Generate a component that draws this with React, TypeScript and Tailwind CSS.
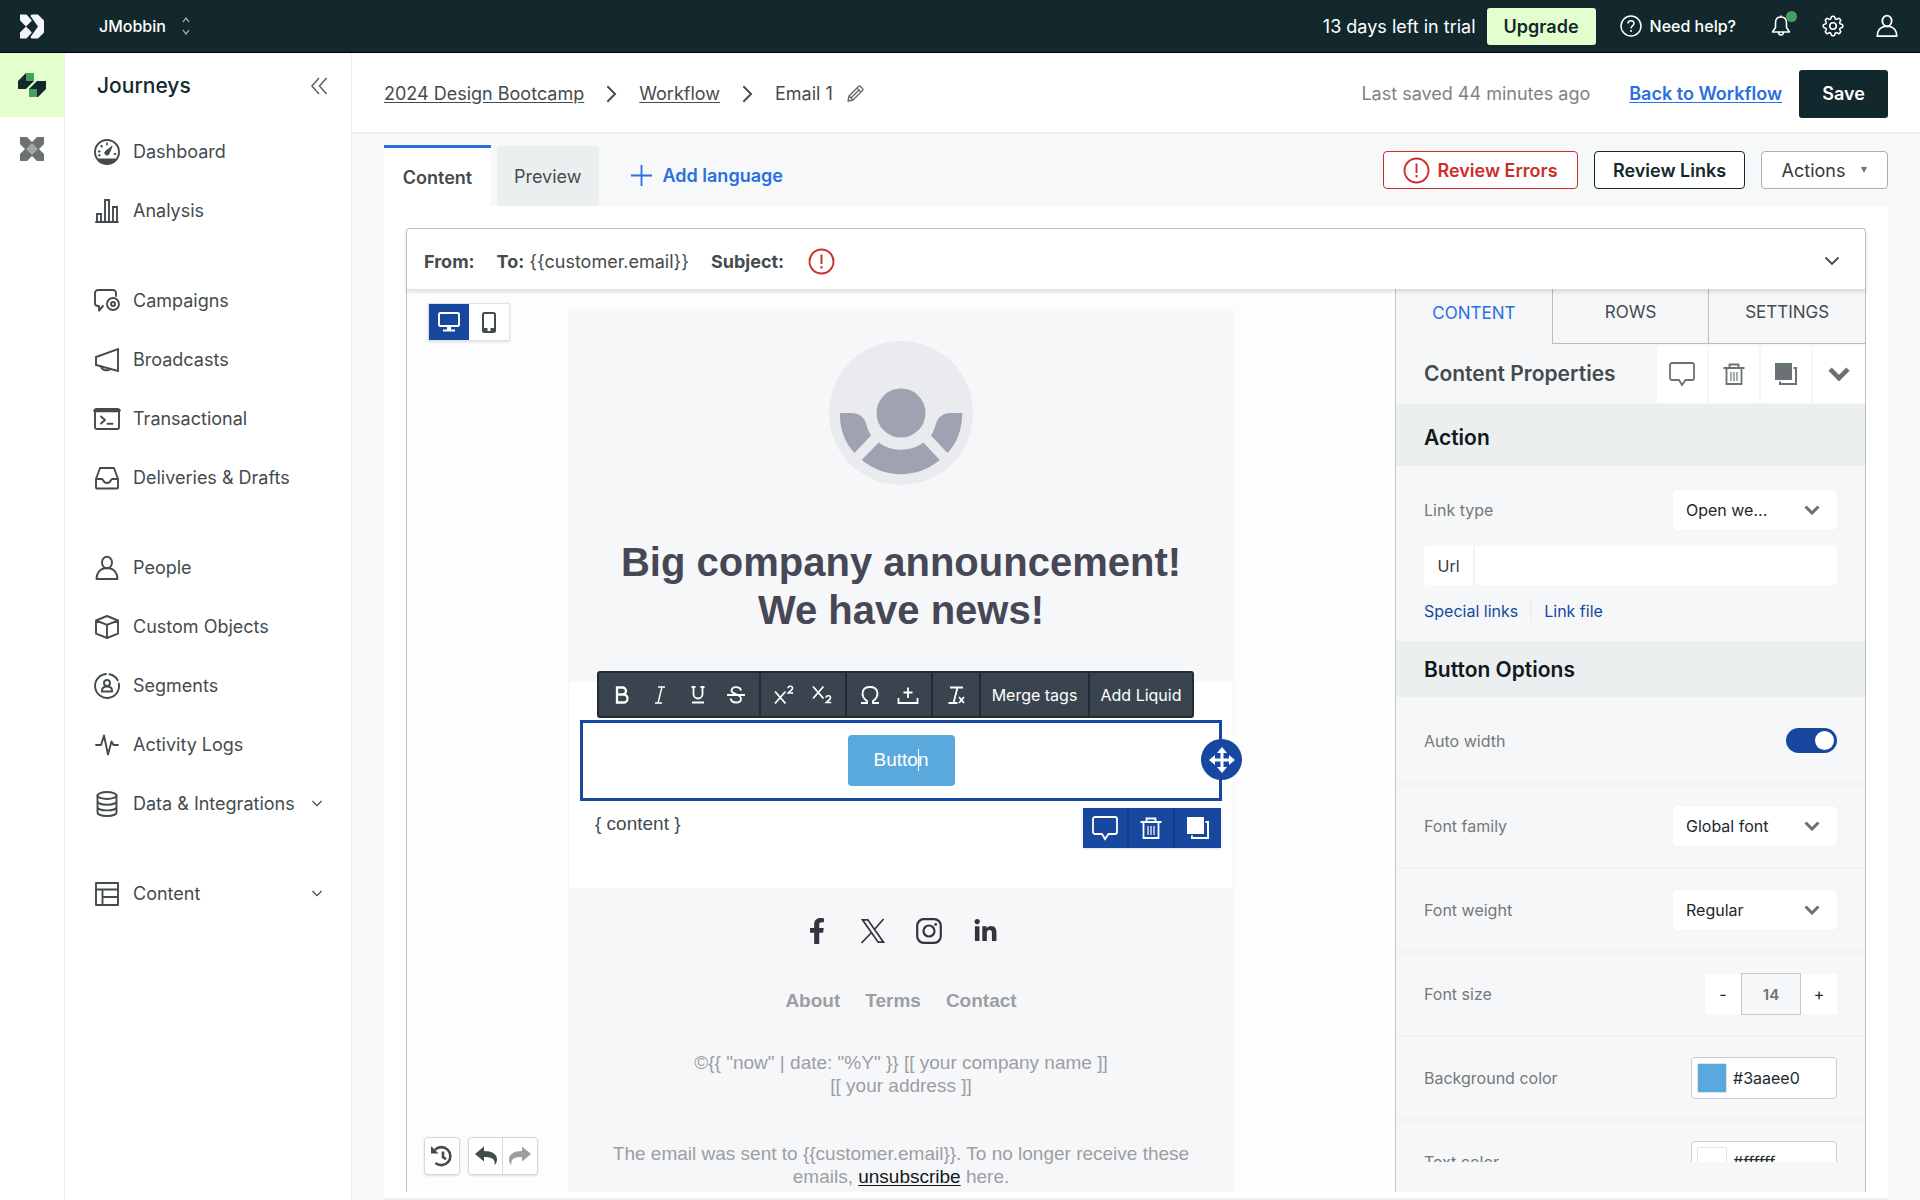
import { useState, type ReactNode } from 'react';
import { FaFacebookF, FaLinkedinIn } from 'react-icons/fa';
import { HiOutlineCog8Tooth } from 'react-icons/hi2';

interface NavItem {
  label: string;
  icon: ReactNode;
  expandable?: boolean;
}

const line = {
  width: 28,
  height: 28,
  viewBox: '0 0 28 28',
  fill: 'none',
  stroke: 'currentColor',
  strokeWidth: 1.9,
  strokeLinejoin: 'round' as const,
  strokeLinecap: 'round' as const,
};

const navGroups: NavItem[][] = [
  [
    {
      label: 'Dashboard',
      icon: (
        <svg {...line}>
          <circle cx="14" cy="14" r="12" />
          <path d="M5.5 21.5h17a12 12 0 0 1-17 0z" fill="currentColor" />
          <path d="M19 8.500l-3 7.200a2.200 2.200 0 1 1-3.200-2.700z" fill="currentColor" strokeWidth="1" />
          <path d="M14 5.500v1M8.300 7.800l.7.800M5.700 13.500h1M21.600 16h.8M6 17.500l.8-.3" />
        </svg>
      ),
    },
    {
      label: 'Analysis',
      icon: (
        <svg {...line}>
          <path d="M3 25h22M4 25v-8h4v8M12 25V3h4v22M20 25V10h4v15" strokeLinejoin="miter" />
        </svg>
      ),
    },
  ],
  [
    {
      label: 'Campaigns',
      icon: (
        <svg {...line}>
          <path d="M23 9V6a3 3 0 0 0-3-3H5a3 3 0 0 0-3 3v10a3 3 0 0 0 3 3h1v4.500l4-4.500" />
          <circle cx="20" cy="17" r="6" />
          <circle cx="20" cy="17" r="2" />
        </svg>
      ),
    },
    {
      label: 'Broadcasts',
      icon: (
        <svg {...line}>
          <path d="M25 3v22L3 19V11z" strokeLinejoin="miter" />
          <path d="M8 20.500c1 4.500 8 4.500 9.500 2.500" />
        </svg>
      ),
    },
    {
      label: 'Transactional',
      icon: (
        <svg {...line}>
          <rect x="2" y="4" width="24" height="20" rx="1.500" />
          <path d="M2 5.500h24" strokeWidth="3.500" />
          <path d="M8 11.500l4 3.500-4 3.500M14.500 18.700h5" />
        </svg>
      ),
    },
    {
      label: 'Deliveries & Drafts',
      icon: (
        <svg {...line}>
          <path d="M3 15L7 4h14l4 11v8.500a1 1 0 0 1-1 1H4a1 1 0 0 1-1-1z" />
          <path d="M3 15h6c1.200 0 1.200 4 5 4s3.800-4 5-4h6" />
        </svg>
      ),
    },
  ],
  [
    { label: 'People', icon: <PersonIcon size={28} /> },
    {
      label: 'Custom Objects',
      icon: (
        <svg {...line}>
          <path d="M14 3l11 4.500v13.200L14 25 3 20.700V7.500zM3 7.500l11 4.300 11-4.300M14 11.800V25" />
        </svg>
      ),
    },
    {
      label: 'Segments',
      icon: (
        <svg {...line}>
          <path d="M13 2a12 12 0 1 0 12.800 9.500M16.500 2.300a12 12 0 0 1 8.200 6" />
          <circle cx="14" cy="11" r="3" />
          <path d="M8.800 19.500c0-3 2-5 5.200-5s5.200 2 5.200 5z" />
        </svg>
      ),
    },
    {
      label: 'Activity Logs',
      icon: (
        <svg {...line}>
          <path d="M3 14h5l3-9.500 4 19 3.500-13 2 3.500H25" />
        </svg>
      ),
    },
    {
      label: 'Data & Integrations',
      expandable: true,
      icon: (
        <svg {...line}>
          <ellipse cx="14" cy="5.500" rx="9.500" ry="3.500" />
          <path d="M4.500 5.500v17c0 2 4 3.500 9.500 3.500s9.500-1.500 9.500-3.500v-17M4.500 11.200c0 2 4 3.500 9.500 3.500s9.500-1.500 9.500-3.500M4.500 16.900c0 2 4 3.500 9.500 3.500s9.500-1.500 9.500-3.500" />
        </svg>
      ),
    },
  ],
  [
    {
      label: 'Content',
      expandable: true,
      icon: (
        <svg {...line}>
          <path d="M3 3h22v22H3zM3 9.500h22M9.500 9.500V25M9.500 17H25" />
        </svg>
      ),
    },
  ],
];

function PersonIcon({ size }: { size: number }) {
  return (
    <svg {...line} width={size} height={size}>
      <ellipse cx="14" cy="8.500" rx="5" ry="5.800" />
      <path d="M3.500 25c0-6 3.500-10 8-10.700h5c4.500.700 8 4.700 8 10.700z" />
    </svg>
  );
}

function Chevron({ className, width = 2 }: { className: string; width?: number }) {
  return (
    <svg viewBox="0 0 16 10" className={className} fill="none" stroke="currentColor" strokeWidth={width}>
      <path d="M1.500 1.500L8 8l6.500-6.500" />
    </svg>
  );
}

function ErrorIcon() {
  return (
    <svg width="27" height="27" viewBox="0 0 27 27" fill="none" stroke="currentColor" strokeWidth="1.900">
      <circle cx="13.500" cy="13.500" r="12" />
      <path d="M13.500 6.500v9.500M13.500 18v2.500" />
    </svg>
  );
}

function CommentIcon() {
  return (
    <svg width="26" height="26" viewBox="0 0 26 26" fill="none" stroke="currentColor" strokeWidth="1.800">
      <path d="M3 2h20a2 2 0 0 1 2 2v13a2 2 0 0 1-2 2h-6.500L13 24l-3-5H3a2 2 0 0 1-2-2V4a2 2 0 0 1 2-2z" />
    </svg>
  );
}

function TrashIcon() {
  return (
    <svg width="24" height="24" viewBox="0 0 24 24" fill="none" stroke="currentColor" strokeWidth="1.800">
      <path d="M1.500 6h21M4.500 6v16h15V6M7.500 6V2.500h9V6" />
      <path d="M9 10v9M12 10v9M15 10v9" strokeWidth="1.200" />
    </svg>
  );
}

function CopyIcon() {
  return (
    <svg width="22" height="22" viewBox="0 0 22 22">
      <path d="M0 0h17v17H0z" fill="currentColor" />
      <path d="M18.500 5H21v16H5v-2.500" fill="none" stroke="currentColor" strokeWidth="2" />
    </svg>
  );
}

function TopBar() {
  return (
    <header className="flex h-[53px] shrink-0 items-center border-b border-black bg-[#12282c] px-5 text-white">
      <svg width="24" height="25" viewBox="0 0 24 24" fill="#f4f5fb">
        <path d="M0 0h6.500l5 5.500v1L6 12 0 6zM0 24h6.500l5-5.500v-1L6 12 0 18z" />
        <path d="M11.500 0H18l6 6v12l-6 6h-6.500l-1-1.500L18 12 10.500 1.500z" />
      </svg>
      <button className="ml-[55px] flex items-center gap-4 text-[16px] font-medium">
        JMobbin
        <svg width="8" height="18" viewBox="0 0 8 18" fill="none" stroke="#b7c0c2" strokeWidth="1.200">
          <path d="M1 5l3-4 3 4M1 13l3 4 3-4" />
        </svg>
      </button>
      <span className="ml-auto text-[18px]">13 days left in trial</span>
      <button className="ml-[11px] h-[37px] w-[109px] rounded-[3px] bg-[#e4ffce] text-[18px] font-semibold text-[#12282c]">
        Upgrade
      </button>
      <button className="ml-6 flex items-center gap-2 text-[16px] font-medium">
        <svg width="22" height="22" viewBox="0 0 22 22" fill="none" stroke="currentColor" strokeWidth="1.500">
          <circle cx="11" cy="11" r="10" />
          <path d="M8 8.500C8 4.700 14 4.700 14 8.500c0 2.500-3 2.200-3 5M11 15v2" />
        </svg>
        Need help?
      </button>
      <button aria-label="Notifications" className="relative ml-[34px]">
        <svg width="22" height="22" viewBox="0 0 22 22" fill="none" stroke="currentColor" strokeWidth="1.600" strokeLinejoin="round">
          <path d="M11 2c-4 0-5.500 3-5.500 6v4.500L2.500 17h17l-3-4.500V8c0-3-1.500-6-5.500-6zM8.500 17c0 4 5 4 5 0M11 .500V2" />
        </svg>
        <span className="absolute -top-1 left-4 size-[11px] rounded-full bg-[#46a05f]" />
      </button>
      <button aria-label="Settings" className="ml-7">
        <HiOutlineCog8Tooth size={26} />
      </button>
      <button aria-label="Account" className="ml-7">
        <PersonIcon size={26} />
      </button>
    </header>
  );
}

function ProductRail() {
  return (
    <div className="flex w-[65px] shrink-0 flex-col border-r border-[#eceff0]">
      <button aria-label="Journeys" className="flex h-16 items-center justify-center bg-[#e4ffce]">
        <svg width="28" height="24" viewBox="0 0 28 24">
          <path d="M0 8l8-8h8v8l-8 8H0zM28 8v8l-8 8h-9v-8l8-8z" fill="#12282c" />
          <path d="M8 0h8v8H8zM11 16h8v8h-8z" fill="#46a05f" />
        </svg>
      </button>
      <button aria-label="Data pipelines" className="flex h-16 items-center justify-center">
        <svg width="24" height="24" viewBox="0 0 24 24">
          <path d="M0 0h7l5 5 5-5h7v7l-5 5 5 5v7h-7l-5-5-5 5H0v-7l5-5-5-5z" fill="#6b7273" />
          <path d="M12 6l6 6-6 6-6-6z" fill="#a3a8a9" />
        </svg>
      </button>
    </div>
  );
}

function Sidebar() {
  return (
    <aside className="w-[287px] shrink-0 border-r border-[#eceff0]">
      <div className="flex h-[66px] items-center pl-8 pr-[23px]">
        <h2 className="text-[21px] font-medium text-[#12282c]">Journeys</h2>
        <button aria-label="Collapse sidebar" className="ml-auto text-[#5f6668]">
          <svg width="18" height="18" viewBox="0 0 18 18" fill="none" stroke="currentColor" strokeWidth="1.600">
            <path d="M9 1L2 9l7 8M16.500 1l-7 8 7 8" />
          </svg>
        </button>
      </div>
      <nav className="mt-[3px] flex flex-col gap-[31px]">
        {navGroups.map((group, i) => (
          <ul key={i}>
            {group.map((item) => (
              <li key={item.label}>
                <a href="#" className="flex h-[59px] items-center gap-3 px-7 text-[18px] text-[#444b4e]">
                  {item.icon}
                  {item.label}
                  {item.expandable && <Chevron className="ml-auto h-[7px] w-3" width={1.8} />}
                </a>
              </li>
            ))}
          </ul>
        ))}
      </nav>
    </aside>
  );
}

function PageHeader() {
  return (
    <div className="flex h-[81px] shrink-0 items-center border-b-2 border-[#eff2f3] bg-white px-8 pt-[2px] text-[18px] text-[#444b4e]">
      <a href="#" className="underline underline-offset-2">2024 Design Bootcamp</a>
      <Chevron className="mx-[18px] h-3 w-[19px] -rotate-90" width={1.6} />
      <a href="#" className="underline underline-offset-2">Workflow</a>
      <Chevron className="mx-[18px] h-3 w-[19px] -rotate-90" width={1.6} />
      <span>Email 1</span>
      <button aria-label="Rename" className="ml-[14px]">
        <svg width="17" height="17" viewBox="0 0 17 17" fill="none" stroke="#5f6668" strokeWidth="1.300" strokeLinejoin="round">
          <path d="M1 16l1-5L11.500 1.500a1.500 1.500 0 0 1 2 0l2 2a1.500 1.500 0 0 1 0 2L6 15zM10 3l4 4M2 11l4 4M12 5l-7.500 7.500" />
        </svg>
      </button>
      <span className="ml-auto text-[#7c8284]">Last saved 44 minutes ago</span>
      <a href="#" className="ml-[39px] font-semibold text-[#2a6fe0] underline underline-offset-2">Back to Workflow</a>
      <button className="ml-[17px] h-12 w-[89px] rounded-[3px] bg-[#12282c] font-semibold text-white">Save</button>
    </div>
  );
}

function TabRow() {
  return (
    <div className="flex items-end text-[18px] text-[#444b4e]">
      <button className="h-[61px] w-[107px] border-t-[3px] border-[#2a6fe0] bg-white font-semibold">Content</button>
      <button className="ml-[6px] h-[60px] bg-[#ebeff0] px-[17px]">Preview</button>
      <button className="ml-8 flex h-[62px] items-center gap-[11px] font-semibold text-[#2a6fe0]">
        <svg width="21" height="21" viewBox="0 0 21 21" stroke="currentColor" strokeWidth="1.800">
          <path d="M10.500 0v21M0 10.500h21" />
        </svg>
        Add language
      </button>
      <div className="mb-[17px] ml-auto flex gap-4">
        <button className="flex h-[38px] w-[195px] items-center justify-center gap-[7px] rounded-[4px] border border-[#cb2f2a] bg-white font-semibold text-[#cb2f2a]">
          <ErrorIcon />
          Review Errors
        </button>
        <button className="h-[38px] w-[151px] rounded-[4px] border border-[#12282c] bg-white font-semibold text-[#12282c]">
          Review Links
        </button>
        <button className="flex h-[38px] w-[127px] items-center justify-center gap-4 rounded-[4px] border border-[#a9b0b2] bg-white text-[#34393c]">
          Actions
          <svg width="6" height="6" viewBox="0 0 6 6" fill="#6b7273">
            <path d="M0 0h6L3 6z" />
          </svg>
        </button>
      </div>
    </div>
  );
}

function DeviceToggle() {
  return (
    <div className="absolute left-[21px] top-[14px] flex h-[38px] border border-[#dfe3e4] bg-white shadow-sm">
      <button aria-label="Desktop" className="flex w-10 items-center justify-center bg-[#17479e] text-white">
        <svg width="22" height="20" viewBox="0 0 22 20" fill="none" stroke="currentColor" strokeWidth="2">
          <rect x="1" y="1" width="20" height="13" rx="1.500" />
          <path d="M5 18.500h12" />
          <path d="M11 14v5" strokeWidth="4" />
        </svg>
      </button>
      <button aria-label="Mobile" className="flex w-10 items-center justify-center text-[#444b4e]">
        <svg width="14" height="21" viewBox="0 0 14 21" fill="none" stroke="currentColor" strokeWidth="2">
          <rect x="1" y="1" width="12" height="19" rx="1.500" />
          <path d="M1 18h4.500M8.500 18H13" strokeWidth="4" />
        </svg>
      </button>
    </div>
  );
}

function UndoArrow({ className }: { className: string }) {
  return (
    <svg width="22" height="20" viewBox="0 0 22 20" fill="currentColor" className={className}>
      <path d="M0 8L9 .500V5c8 0 13 3 13 8.500 0 2.500-1 4.500-2.500 5.500C20.500 13 17 11 9 11v4.500z" />
    </svg>
  );
}

function HistoryControls() {
  return (
    <div className="absolute bottom-[17px] left-[17px] flex gap-2 text-[#444b4e]">
      <button aria-label="History" className="flex h-[38px] w-9 items-center justify-center rounded border border-[#d5d9db] bg-white shadow-sm">
        <svg width="22" height="22" viewBox="0 0 22 22" fill="none" stroke="currentColor" strokeWidth="2.600">
          <path d="M4 4.800A9 9 0 1 1 4.500 18" />
          <path d="M12 6.500V12l3 2.200" />
          <path d="M0 1v7.500h7.500z" fill="currentColor" stroke="none" />
        </svg>
      </button>
      <div className="flex h-[38px] rounded border border-[#d5d9db] bg-white shadow-sm">
        <button aria-label="Undo" className="flex w-[34px] items-center justify-center border-r border-[#d5d9db]">
          <UndoArrow className="text-[#444b4e]" />
        </button>
        <button aria-label="Redo" className="flex w-[34px] items-center justify-center">
          <UndoArrow className="-scale-x-100 text-[#9aa0a2]" />
        </button>
      </div>
    </div>
  );
}

function ToolGroup({ children }: { children: ReactNode }) {
  return <div className="flex items-center border-r-2 border-[#222c35] px-1">{children}</div>;
}

function Tool({ label, children }: { label: string; children: ReactNode }) {
  return (
    <button aria-label={label} className="flex h-full w-[38px] items-center justify-center">
      {children}
    </button>
  );
}

function TextToolbar() {
  const draw = {
    width: 22,
    height: 22,
    viewBox: '0 0 22 22',
    fill: 'none',
    stroke: 'currentColor',
    strokeWidth: 1.8,
  };
  return (
    <div className="absolute -top-[11px] left-7 flex h-[47px] items-stretch rounded-[3px] border-2 border-[#222c35] bg-[#3a444f] font-['Inter',sans-serif] text-[16px] text-white">
      <ToolGroup>
        <Tool label="Bold">
          <svg {...draw} strokeWidth="2.300">
            <path d="M6 3.500h5.500a3.500 3.500 0 0 1 0 7H6zM6 10.500h6.500a4 4 0 0 1 0 8H6z" />
          </svg>
        </Tool>
        <Tool label="Italic">
          <svg {...draw} strokeWidth="1.400">
            <path d="M9 3h7M6 19h7M13 3l-4 16" />
          </svg>
        </Tool>
        <Tool label="Underline">
          <svg {...draw}>
            <path d="M6.500 3v7a4.500 4.500 0 0 0 9 0V3M4.500 3h4M13.500 3h4M5 18.500h12" />
          </svg>
        </Tool>
        <Tool label="Strikethrough">
          <svg {...draw}>
            <path d="M16 6.500C15 1.800 6 2.300 6.500 6.800c.3 3.200 9.500 3.400 9.500 7.900 0 5-9.500 5.200-10.300-.200M2 11h18" />
          </svg>
        </Tool>
      </ToolGroup>
      <ToolGroup>
        <Tool label="Superscript">
          <svg {...draw}>
            <path d="M2 7.500l10.500 12M12.500 7.500L2 19.500" />
            <path d="M15 4.200c.3-3 5-2.500 4.500.3-.3 1.700-3 3-4.300 4.500h5" strokeWidth="1.500" />
          </svg>
        </Tool>
        <Tool label="Subscript">
          <svg {...draw}>
            <path d="M2 2.500l10.500 12M12.500 2.500L2 14.500" />
            <path d="M15 13.700c.3-3 5-2.500 4.500.3-.3 1.700-3 3-4.300 4.500h5" strokeWidth="1.500" />
          </svg>
        </Tool>
      </ToolGroup>
      <ToolGroup>
        <Tool label="Special character">
          <svg {...draw}>
            <path d="M2 19h6v-2C1 12 2.500 3 11 3s10 9 3 14v2h6" />
          </svg>
        </Tool>
        <Tool label="Upload">
          <svg {...draw}>
            <path d="M1.500 14v5h19v-5M11 3.500V14M6.500 8.500h9" />
          </svg>
        </Tool>
      </ToolGroup>
      <ToolGroup>
        <Tool label="Clear formatting">
          <svg {...draw}>
            <path d="M5 3.500h13M12.500 3.500L8.500 19M3.500 19h9M14 13l5 6M19 13l-5 6" />
          </svg>
        </Tool>
      </ToolGroup>
      <button className="w-[109px] border-r-2 border-[#222c35]">Merge tags</button>
      <button className="w-[102px]">Add Liquid</button>
    </div>
  );
}

function EmailCanvas() {
  return (
    <div className="mx-auto w-[666px] font-['Liberation_Sans',Arial,sans-serif] text-[19px]">
      <section className="flex flex-col items-center bg-[#f6f7f9] pb-12 pt-8">
        <svg width="144" height="144" viewBox="0 0 144 144">
          <circle cx="72" cy="72" r="72" fill="#eaebef" />
          <g fill="#9fa2b0">
            <circle cx="72" cy="72" r="24.500" />
            <path d="M10.800 72H22c8 0 12.500 4 14.500 9 1.500 5 3 9.500 5.500 13.500L25.500 112C15 101 10.800 87 10.800 72z" />
            <path d="M133.200 72H122c-8 0-12.500 4-14.500 9-1.500 5-3 9.500-5.500 13.500l16.500 17.500c10.500-11 14.700-25 14.700-40z" />
            <path d="M49.700 101.500c13 9.600 31.600 9.600 44.600 0L110.800 119c-23 19-54.600 19-78.100 0z" />
          </g>
        </svg>
        <h1 className="mt-[53px] text-center text-[40px] font-bold leading-[48px] text-[#474756]">
          Big company announcement!
          <br />
          We have news!
        </h1>
      </section>

      <section className="relative h-[206px] border-x border-[#f3f5f6] bg-white pt-[38px]">
        <div className="relative mx-[11px] flex h-[81px] items-center justify-center border-[3px] border-[#17479e]">
          <button className="relative h-[51px] w-[107px] rounded bg-[#5aa9dd] text-white">
            Button
            <span className="absolute left-[70px] top-[14px] h-[22px] w-px bg-white" />
          </button>
          <button aria-label="Move" className="absolute -right-[23px] top-4 flex size-[41px] items-center justify-center rounded-full bg-[#17479e]">
            <svg width="28" height="28" viewBox="0 0 28 28" fill="#fff">
              <path d="M14 1l5 6h-3.500v5.500H21V9l6 5-6 5v-3.500h-5.500V21H19l-5 6-5-6h3.500v-5.500H7V19l-6-5 6-5v3.500h5.500V7H9z" />
            </svg>
          </button>
        </div>
        <p className="ml-[26px] mt-[11px] leading-6 text-[#444b4e]">{'{ content }'}</p>
        <TextToolbar />
        <div className="absolute right-3 top-[126px] flex h-10 divide-x-2 divide-[#123a86] bg-[#17479e] text-white shadow">
          <button aria-label="Comment" className="flex w-[46px] items-center justify-center"><CommentIcon /></button>
          <button aria-label="Delete" className="flex w-[46px] items-center justify-center"><TrashIcon /></button>
          <button aria-label="Duplicate" className="flex w-[46px] items-center justify-center"><CopyIcon /></button>
        </div>
      </section>

      <section className="flex h-[310px] flex-col items-center bg-[#f6f7f9] pt-[30px] text-center leading-[23px] text-[#9b9ea3]">
        <div className="flex items-center gap-7 text-[#34343f]">
          <a href="#" aria-label="Facebook" className="flex w-7 justify-center"><FaFacebookF size={26} /></a>
          <a href="#" aria-label="X" className="flex w-7 justify-center">
            <svg width="26" height="26" viewBox="0 0 26 26" fill="none" stroke="currentColor" strokeWidth="1.700">
              <path d="M2.500 1.800h5.300l15.700 22.400h-5.300zM23.500 1L14 12M12 14L1.500 25" />
            </svg>
          </a>
          <a href="#" aria-label="Instagram">
            <svg width="28" height="26" viewBox="0 0 26 26" fill="none" stroke="currentColor" strokeWidth="2.200">
              <rect x="1.200" y="1.200" width="23.600" height="23.600" rx="6.500" />
              <circle cx="13" cy="13" r="5.500" />
              <circle cx="19.700" cy="6.400" r="1.400" fill="currentColor" stroke="none" />
            </svg>
          </a>
          <a href="#" aria-label="LinkedIn" className="flex w-7 justify-center"><FaLinkedinIn size={25} /></a>
        </div>
        <div className="mt-[45px] flex gap-[25px] font-bold">
          <a href="#">About</a>
          <a href="#">Terms</a>
          <a href="#">Contact</a>
        </div>
        <p className="mt-[39px]">
          {'©{{ "now" | date: "%Y" }} [[ your company name ]]'}
          <br />
          [[ your address ]]
        </p>
        <p className="mt-[45px]">
          {'The email was sent to {{customer.email}}. To no longer receive these'}
          <br />
          {'emails, '}
          <a href="#" className="text-[#12181b] underline underline-offset-2">unsubscribe</a> here.
        </p>
      </section>
    </div>
  );
}

function PanelSelect({ id, options }: { id: string; options: string[] }) {
  return (
    <div className="relative">
      <select id={id} className="h-10 w-[164px] appearance-none rounded bg-white pl-[13px] text-[16px] text-[#23292c] shadow-[0_0_1px_#d5d9db]">
        {options.map((o) => (
          <option key={o}>{o}</option>
        ))}
      </select>
      <Chevron className="pointer-events-none absolute right-[17px] top-[15px] h-[10px] w-4 text-[#6b7273]" width={3} />
    </div>
  );
}

function ColorField({ id, value, swatch }: { id: string; value: string; swatch: string }) {
  return (
    <div className="flex h-[42px] w-[146px] items-center gap-[6px] rounded border border-[#c9cdcf] bg-white pl-[5px]">
      <span className={`size-[30px] shrink-0 rounded-[2px] border border-[#dfe3e4] ${swatch}`} />
      <input id={id} defaultValue={value} className="w-[90px] text-[16px] text-[#23292c] outline-none" />
    </div>
  );
}

function PropertyRow({ label, id, children }: { label: string; id: string; children: ReactNode }) {
  return (
    <div className="flex h-[84px] shrink-0 items-center justify-between border-b-2 border-[#eff1f2] px-7">
      <label htmlFor={id} className="text-[16px] text-[#73797b]">{label}</label>
      {children}
    </div>
  );
}

function PropertiesPanel() {
  const [autoWidth, setAutoWidth] = useState(true);
  const [fontSize, setFontSize] = useState(14);

  return (
    <aside className="flex w-[470px] shrink-0 flex-col border-l border-[#c3c8ca] bg-[#f6f7f9]">
      <div className="flex h-[55px] shrink-0 text-[17px] text-[#444b4e]">
        <button className="flex-1 pb-[6px] text-[#2a6fe0]">CONTENT</button>
        <button className="flex-1 border-b border-l border-[#b9bec0] pb-[6px]">ROWS</button>
        <button className="flex-1 border-b border-l border-[#b9bec0] pb-[6px]">SETTINGS</button>
      </div>
      <div className="flex h-[60px] shrink-0 items-center justify-between pl-7">
        <h3 className="text-[21px] font-semibold text-[#444b4e]">Content Properties</h3>
        <div className="flex h-[57px] divide-x-2 divide-[#f6f7f9] bg-white text-[#6b7273]">
          <button aria-label="Comment" className="flex w-[52px] items-center justify-center"><CommentIcon /></button>
          <button aria-label="Delete" className="flex w-[52px] items-center justify-center"><TrashIcon /></button>
          <button aria-label="Duplicate" className="flex w-[52px] items-center justify-center"><CopyIcon /></button>
          <button aria-label="Collapse" className="flex w-[52px] items-center justify-center">
            <Chevron className="h-[14px] w-[22px]" width={3.4} />
          </button>
        </div>
      </div>
      <div className="mb-[30px] flex min-h-0 flex-1 flex-col overflow-hidden">
        <h4 className="flex h-[62px] shrink-0 items-center bg-[#ebeff0] px-7 pt-[6px] text-[21px] font-semibold text-[#12181b]">Action</h4>
        <div className="h-[175px] shrink-0 px-7 pt-6">
          <div className="flex items-center justify-between">
            <label htmlFor="link-type" className="text-[16px] text-[#73797b]">Link type</label>
            <PanelSelect id="link-type" options={['Open we...', 'Send email']} />
          </div>
          <div className="mt-4 flex h-[39px] overflow-hidden rounded bg-white">
            <label htmlFor="url" className="flex w-[51px] items-center justify-center border-r-2 border-[#f1f3f4] text-[16px] text-[#34393c]">Url</label>
            <input id="url" className="min-w-0 flex-1 px-3 text-[16px] outline-none" />
          </div>
          <div className="mt-[15px] flex divide-x-2 divide-[#eef0f1] text-[16px] leading-[22px] text-[#17479e]">
            <a href="#" className="pr-3">Special links</a>
            <a href="#" className="pl-3">Link file</a>
          </div>
        </div>
        <h4 className="flex h-[56px] shrink-0 items-center bg-[#ebeff0] px-7 pt-px text-[21px] font-semibold text-[#12181b]">Button Options</h4>
        <div className="flex h-[88px] shrink-0 items-center justify-between border-b-2 border-[#eff1f2] px-7 pt-px">
          <label htmlFor="auto-width" className="text-[16px] text-[#73797b]">Auto width</label>
          <input
            id="auto-width"
            type="checkbox"
            checked={autoWidth}
            onChange={() => setAutoWidth(!autoWidth)}
            className="relative h-[25px] w-[51px] appearance-none rounded-full bg-gray-400 before:absolute before:left-[3px] before:top-[3px] before:size-[19px] before:rounded-full before:bg-white checked:bg-[#17479e] checked:before:left-[29px]"
          />
        </div>
        <PropertyRow label="Font family" id="font-family">
          <PanelSelect id="font-family" options={['Global font', 'Arial', 'Georgia']} />
        </PropertyRow>
        <PropertyRow label="Font weight" id="font-weight">
          <PanelSelect id="font-weight" options={['Regular', 'Bold']} />
        </PropertyRow>
        <PropertyRow label="Font size" id="font-size">
          <div className="flex items-center text-[16px] text-[#23292c]">
            <button onClick={() => setFontSize(fontSize - 1)} className="h-10 w-9 bg-white">-</button>
            <input
              id="font-size"
              value={fontSize}
              onChange={(e) => setFontSize(Number(e.target.value))}
              className="h-[42px] w-[60px] border border-[#c3c8ca] text-center text-[15px] font-semibold text-[#6b7273] outline-none"
            />
            <button onClick={() => setFontSize(fontSize + 1)} className="h-10 w-9 bg-white">+</button>
          </div>
        </PropertyRow>
        <PropertyRow label="Background color" id="background-color">
          <ColorField id="background-color" value="#3aaee0" swatch="bg-[#5aa9dd]" />
        </PropertyRow>
        <PropertyRow label="Text color" id="text-color">
          <ColorField id="text-color" value="#ffffff" swatch="bg-white" />
        </PropertyRow>
      </div>
    </aside>
  );
}

function Editor() {
  return (
    <div className="flex min-h-0 flex-1 flex-col border-b-2 border-[#eceff0] bg-white px-[22px] pt-[22px]">
      <div className="relative z-10 flex h-[61px] shrink-0 items-center rounded-t border-x border-t border-[#b9bec0] bg-white px-[17px] pt-1 text-[18px] text-[#444b4e] shadow-[0_3px_4px_rgba(0,0,0,0.12)]">
        <span className="font-bold">From:</span>
        <span className="ml-[22px]">
          <span className="font-bold">To:</span> {'{{customer.email}}'}
        </span>
        <span className="ml-[22px] font-bold">Subject:</span>
        <span className="ml-6 text-[#cb2f2a]">
          <ErrorIcon />
        </span>
        <button aria-label="Expand" className="ml-auto mr-2">
          <Chevron className="h-[10px] w-4" width={1.8} />
        </button>
      </div>
      <div className="mb-[6px] flex min-h-0 flex-1 border-x border-[#b9bec0]">
        <div className="relative min-w-0 flex-1 overflow-hidden bg-[#fdfdfd] pt-5">
          <EmailCanvas />
          <DeviceToggle />
          <HistoryControls />
        </div>
        <PropertiesPanel />
      </div>
    </div>
  );
}

export default function App() {
  return (
    <div className="flex h-screen flex-col overflow-hidden bg-white font-['Inter',sans-serif]">
      <TopBar />
      <div className="flex min-h-0 flex-1">
        <ProductRail />
        <Sidebar />
        <main className="flex min-w-0 flex-1 flex-col bg-[#f6f8f9]">
          <PageHeader />
          <div className="flex min-h-0 flex-1 flex-col px-8 pt-[10px]">
            <TabRow />
            <Editor />
          </div>
        </main>
      </div>
    </div>
  );
}
